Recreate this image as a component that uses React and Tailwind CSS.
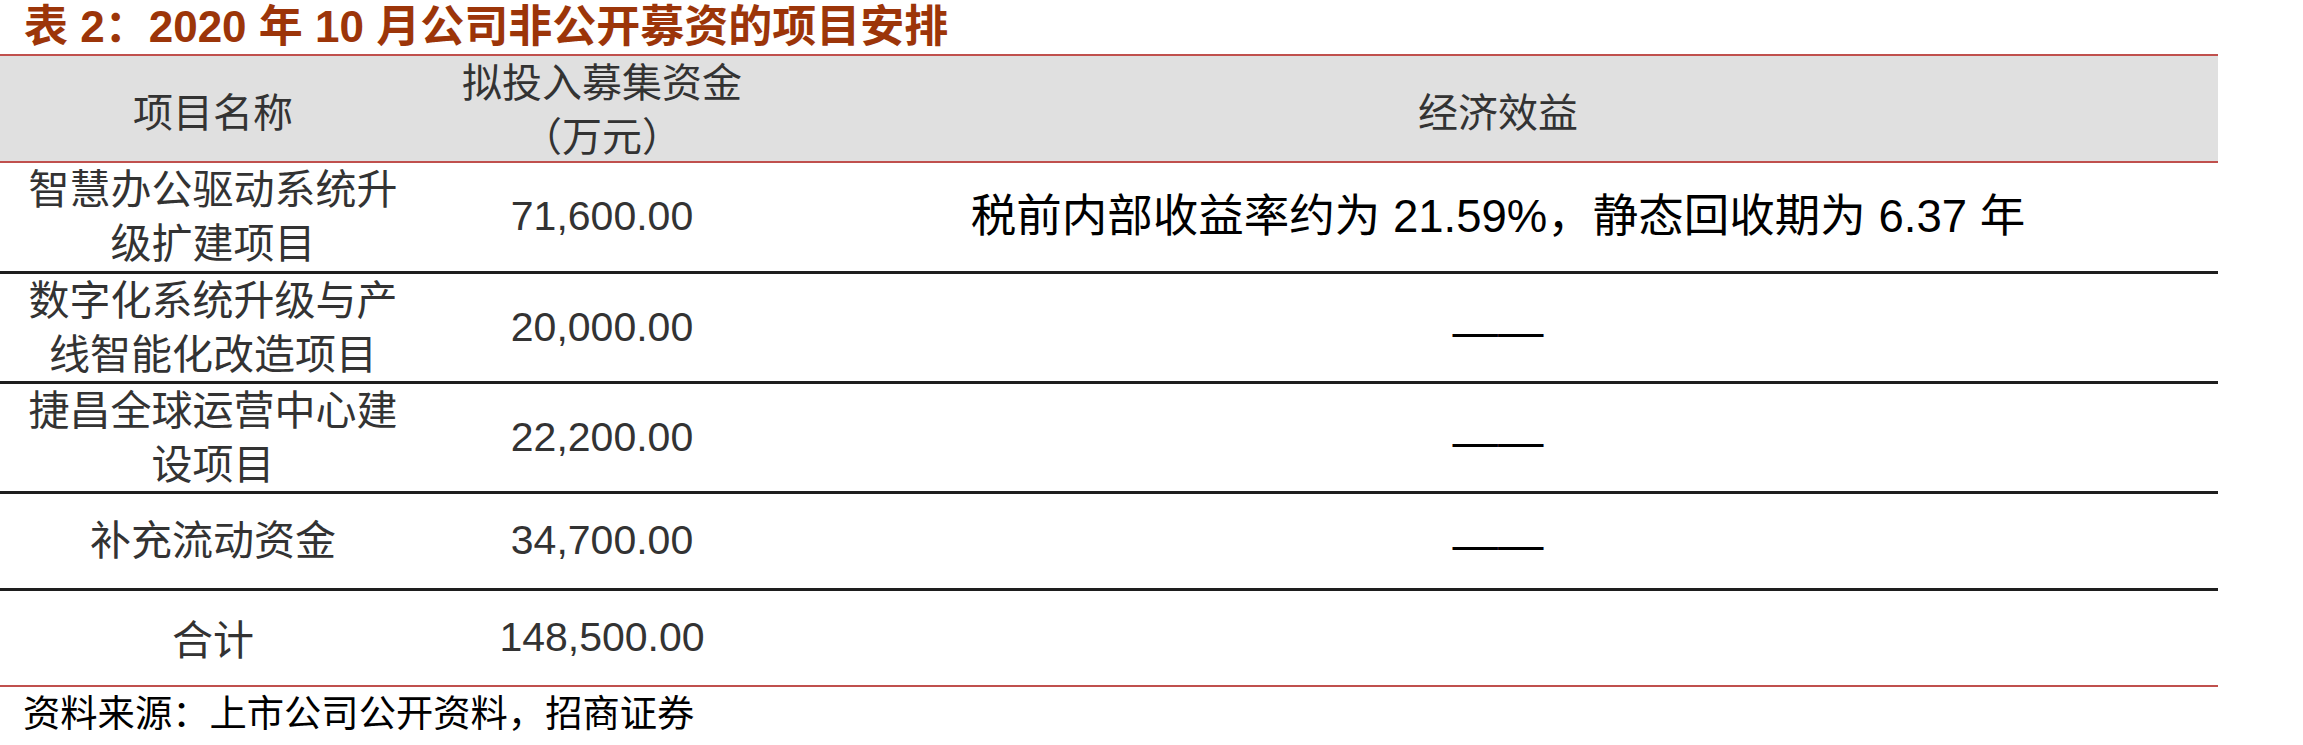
export default function App() {
  const cjk = "font-['Noto_Sans_CJK_SC',sans-serif]";
  const lat = "font-['Liberation_Sans','Noto_Sans_CJK_SC',sans-serif]";
  const rows = [
    { name: ["智慧办公驱动系统升", "级扩建项目"], amt: "71,600.00", eff: "text", h: "h-[111px]" },
    { name: ["数字化系统升级与产", "线智能化改造项目"], amt: "20,000.00", eff: "dash", h: "h-[110px]" },
    { name: ["捷昌全球运营中心建", "设项目"], amt: "22,200.00", eff: "dash", h: "h-[110px]" },
    { name: ["补充流动资金"], amt: "34,700.00", eff: "dash", h: "h-[97px]" },
  ];
  return (
    <div className="w-[2303px] h-[745px] bg-white overflow-hidden">
      <div className={`h-[54px] pl-[24px] leading-[54px] text-[44px] font-bold text-[#9c3509] whitespace-nowrap ${lat}`}>
        表 2：2020 年 10 月公司非公开募资的项目安排
      </div>
      <div className="w-[2218px]">
        <div className="grid grid-cols-[426px_352px_1440px] h-[109px] border-y-2 border-[#c0504d] bg-[#e0e0e0] text-[#333] text-[40px]">
          <div className={`flex items-center justify-center ${cjk}`}>项目名称</div>
          <div className={`flex items-center justify-center text-center leading-[54px] ${lat}`}>
            <p>
              拟投入募集资金
              <br />
              （万元）
            </p>
          </div>
          <div className={`flex items-center justify-center ${cjk}`}>经济效益</div>
        </div>
        {rows.map((r, i) => (
          <div key={i} className={`grid grid-cols-[426px_352px_1440px] ${r.h} border-b-[3px] border-[#1e1e1e]`}>
            <div className={`flex items-center justify-center text-center text-[41px] leading-[54px] text-[#333] ${lat}`}>
              <p>
                {r.name[0]}
                {r.name[1] ? <br /> : null}
                {r.name[1] || null}
              </p>
            </div>
            <div className={`flex items-center justify-center text-[41px] text-[#333] ${lat}`}>{r.amt}</div>
            <div className={`flex items-center justify-center text-[45.5px] text-black whitespace-nowrap ${lat}`}>
              {r.eff === "text" ? (
                <span>税前内部收益率约为 21.59%，静态回收期为 6.37 年</span>
              ) : (
                <span className="font-['Liberation_Sans',sans-serif] translate-y-[4px]">——</span>
              )}
            </div>
          </div>
        ))}
        <div className="grid grid-cols-[426px_352px_1440px] h-[96px] border-b-2 border-[#c0504d]">
          <div className={`flex items-center justify-center text-[41px] text-[#333] ${cjk}`}>合计</div>
          <div className={`flex items-center justify-center text-[41px] text-[#333] ${lat}`}>148,500.00</div>
          <div></div>
        </div>
      </div>
      <div className={`pl-[23px] text-[37.3px] leading-[48px] text-black whitespace-nowrap ${cjk}`}>
        资料来源：上市公司公开资料，招商证券
      </div>
    </div>
  );
}
